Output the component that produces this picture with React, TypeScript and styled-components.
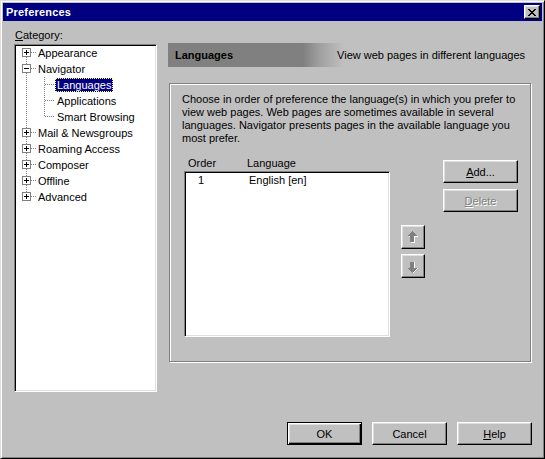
import styled, { createGlobalStyle } from "styled-components";

const GlobalStyle = createGlobalStyle`
  html, body {
    margin: 0;
    padding: 0;
    background: #c0c0c0;
  }
  body {
    font-family: "Liberation Sans", Arial, sans-serif;
    font-size: 11px;
    color: #000;
  }
  * {
    box-sizing: border-box;
  }
`;

const Window = styled.div`
  width: 545px;
  height: 459px;
  background: #c0c0c0;
  border: 1px solid;
  border-color: #dfdfdf #000 #000 #dfdfdf;
  box-shadow: inset 1px 1px #fff, inset -1px -1px #808080;
  padding: 2px;
  display: flex;
  flex-direction: column;
`;

const TitleBar = styled.div`
  height: 18px;
  background: #000080;
  color: #fff;
  display: flex;
  align-items: center;
  justify-content: space-between;
  padding: 0 2px 0 3px;
  font-weight: bold;
  font-size: 11px;
  letter-spacing: 0.2px;
`;

const raised = `
  background: #c0c0c0;
  border: 1px solid;
  border-color: #fff #000 #000 #fff;
  box-shadow: inset -1px -1px #808080, inset 1px 1px #dfdfdf;
`;

const CloseButton = styled.div`
  ${raised}
  width: 16px;
  height: 14px;
  display: flex;
  align-items: center;
  justify-content: center;
`;

const Body = styled.div`
  flex: 1;
  display: flex;
  flex-direction: column;
  padding: 0 10px 11px 11px;
`;

const Main = styled.div`
  display: flex;
  gap: 11px;
`;

const LeftColumn = styled.div`
  width: 143px;
  display: flex;
  flex-direction: column;
`;

const FieldLabel = styled.div`
  line-height: 13px;
  margin: 8px 0 2px 1px;
`;

const sunken = `
  background: #fff;
  border: 1px solid;
  border-color: #808080 #fff #fff #808080;
  box-shadow: inset 1px 1px #000, inset -1px -1px #dfdfdf;
`;

const TreeBox = styled.div`
  ${sunken}
  height: 348px;
  padding: 0 2px;
`;

const TreeRow = styled.div`
  height: 16px;
  display: flex;
  align-items: center;
  white-space: nowrap;
`;

const TreeLabel = styled.span<{ $selected?: boolean }>`
  line-height: 14px;
  height: 14px;
  padding: 0 2px;
  margin-top: -1px;
  background: ${({ $selected }) => ($selected ? "#000080" : "transparent")};
  color: ${({ $selected }) => ($selected ? "#fff" : "#000")};
  outline: ${({ $selected }) => ($selected ? "1px dotted #ffff80" : "none")};
  outline-offset: -1px;
`;

const RightColumn = styled.div`
  width: 364px;
  padding-top: 22px;
  display: flex;
  flex-direction: column;
`;

const Heading = styled.div`
  height: 24px;
  display: flex;
  align-items: center;
  justify-content: space-between;
  padding: 0 7px;
  background: linear-gradient(
    90deg,
    #808080 0,
    #808080 135px,
    #a0a0a0 152px,
    #c0c0c0 176px
  );
`;

const HeadingTitle = styled.span`
  font-weight: bold;
`;

const GroupBox = styled.div`
  margin: 16px 0 0 1px;
  width: 362px;
  height: 279px;
  border: 1px solid #808080;
  box-shadow: inset 1px 1px #fff, 1px 1px #fff;
  padding: 9px 12px 0 12px;
`;

const Intro = styled.div`
  line-height: 13px;
  white-space: nowrap;
`;

const ListArea = styled.div`
  display: flex;
  margin-top: 12px;
`;

const ListColumn = styled.div`
  margin-left: 2px;
  width: 206px;
`;

const ColumnHeads = styled.div`
  display: grid;
  grid-template-columns: 59px 1fr;
  line-height: 13px;
  padding-left: 4px;
  margin-bottom: 1px;
`;

const ListBox = styled.div`
  ${sunken}
  height: 166px;
  padding: 2px;
`;

const ListRow = styled.div`
  display: grid;
  grid-template-columns: 62px 1fr;
  line-height: 12px;
  & > span:first-child {
    padding-left: 11px;
  }
`;

const ArrowColumn = styled.div`
  margin-left: 11px;
  padding-top: 68px;
  display: flex;
  flex-direction: column;
  gap: 5px;
`;

const ArrowButton = styled.div`
  ${raised}
  width: 24px;
  height: 24px;
  display: flex;
  align-items: center;
  justify-content: center;
`;

const ActionColumn = styled.div`
  margin-left: 18px;
  padding-top: 3px;
  display: flex;
  flex-direction: column;
  gap: 6px;
`;

const Button = styled.div<{ $disabled?: boolean; $default?: boolean }>`
  ${raised}
  width: 75px;
  height: 23px;
  display: flex;
  align-items: center;
  justify-content: center;
  color: ${({ $disabled }) => ($disabled ? "#808080" : "#000")};
  text-shadow: ${({ $disabled }) => ($disabled ? "1px 1px #fff" : "none")};
  ${({ $default }) =>
    $default
      ? `
    border: 1px solid #000;
    box-shadow: inset 1px 1px #fff, inset -1px -1px #000, inset -2px -2px #808080, inset 2px 2px #dfdfdf;
  `
      : ""}
`;

const Footer = styled.div`
  margin-top: auto;
  display: flex;
  justify-content: flex-end;
  gap: 10px;
`;

type Item = {
  label: string;
  level: 0 | 1;
  expander?: "plus" | "minus";
  selected?: boolean;
  first?: boolean;
  last?: boolean;
};

const items: Item[] = [
  { label: "Appearance", level: 0, expander: "plus", first: true },
  { label: "Navigator", level: 0, expander: "minus" },
  { label: "Languages", level: 1, selected: true },
  { label: "Applications", level: 1 },
  { label: "Smart Browsing", level: 1, last: true },
  { label: "Mail & Newsgroups", level: 0, expander: "plus" },
  { label: "Roaming Access", level: 0, expander: "plus" },
  { label: "Composer", level: 0, expander: "plus" },
  { label: "Offline", level: 0, expander: "plus" },
  { label: "Advanced", level: 0, expander: "plus", last: true },
];

const dot = {
  stroke: "#808080",
  strokeWidth: 1,
  strokeDasharray: "1 1",
  shapeRendering: "crispEdges" as const,
};

const Connector = ({ item }: { item: Item }) => {
  if (item.level === 1) {
    return (
      <svg width="38" height="16">
        <line x1="9.5" y1="0" x2="9.5" y2="16" {...dot} />
        <line x1="27.5" y1="0" x2="27.5" y2={item.last ? 8 : 16} {...dot} />
        <line x1="28" y1="7.5" x2="38" y2="7.5" {...dot} />
      </svg>
    );
  }
  return (
    <svg width="19" height="16">
      {!item.first && <line x1="9.5" y1="0" x2="9.5" y2="3" {...dot} />}
      {!item.last && <line x1="9.5" y1="12" x2="9.5" y2="16" {...dot} />}
      <line x1="14" y1="7.5" x2="19" y2="7.5" {...dot} />
      <rect
        x="5.5"
        y="3.5"
        width="8"
        height="8"
        fill="#fff"
        stroke="#808080"
        shapeRendering="crispEdges"
      />
      <line x1="7" y1="7.5" x2="12" y2="7.5" stroke="#000" shapeRendering="crispEdges" />
      {item.expander === "plus" && (
        <line x1="9.5" y1="5" x2="9.5" y2="10" stroke="#000" shapeRendering="crispEdges" />
      )}
    </svg>
  );
};

const CloseIcon = () => (
  <svg width="8" height="7" viewBox="0 0 8 7" shapeRendering="crispEdges">
    <path
      d="M0 0h2v1h1v1h2v-1h1v-1h2v1h-1v1h-1v1h-1v1h1v1h1v1h1v1h-2v-1h-1v-1h-2v1h-1v1h-2v-1h1v-1h1v-1h1v-1h-1v-1h-1v-1h-1z"
      fill="#000"
    />
  </svg>
);

const Arrow = ({ down }: { down?: boolean }) => {
  const pts = "5,0 10,5 7,5 7,11 3,11 3,5 0,5";
  return (
    <svg
      width="12"
      height="13"
      viewBox="0 0 12 13"
      shapeRendering="crispEdges"
      style={down ? { transform: "scaleY(-1)" } : undefined}
    >
      <polygon points={pts} fill="#fff" transform={down ? "translate(1,0)" : "translate(1,1)"} />
      <polygon points={pts} fill="#808080" />
    </svg>
  );
};

export default function App() {
  return (
    <>
      <GlobalStyle />
      <Window>
        <TitleBar>
          <span>Preferences</span>
          <CloseButton>
            <CloseIcon />
          </CloseButton>
        </TitleBar>
        <Body>
          <Main>
            <LeftColumn>
              <FieldLabel>
                <u>C</u>ategory:
              </FieldLabel>
              <TreeBox>
                {items.map((item) => (
                  <TreeRow key={item.label}>
                    <Connector item={item} />
                    <TreeLabel $selected={item.selected}>{item.label}</TreeLabel>
                  </TreeRow>
                ))}
              </TreeBox>
            </LeftColumn>
            <RightColumn>
              <Heading>
                <HeadingTitle>Languages</HeadingTitle>
                <span>View web pages in different languages</span>
              </Heading>
              <GroupBox>
                <Intro>
                  Choose in order of preference the language(s) in which you prefer to
                  <br />
                  view web pages. Web pages are sometimes available in several
                  <br />
                  languages. Navigator presents pages in the available language you
                  <br />
                  most prefer.
                </Intro>
                <ListArea>
                  <ListColumn>
                    <ColumnHeads>
                      <span>Order</span>
                      <span>Language</span>
                    </ColumnHeads>
                    <ListBox>
                      <ListRow>
                        <span>1</span>
                        <span>English [en]</span>
                      </ListRow>
                    </ListBox>
                  </ListColumn>
                  <ArrowColumn>
                    <ArrowButton>
                      <Arrow />
                    </ArrowButton>
                    <ArrowButton>
                      <Arrow down />
                    </ArrowButton>
                  </ArrowColumn>
                  <ActionColumn>
                    <Button>
                      <span>
                        <u>A</u>dd...
                      </span>
                    </Button>
                    <Button $disabled>
                      <span>
                        <u>D</u>elete
                      </span>
                    </Button>
                  </ActionColumn>
                </ListArea>
              </GroupBox>
            </RightColumn>
          </Main>
          <Footer>
            <Button $default>OK</Button>
            <Button>Cancel</Button>
            <Button>
              <span>
                <u>H</u>elp
              </span>
            </Button>
          </Footer>
        </Body>
      </Window>
    </>
  );
}
